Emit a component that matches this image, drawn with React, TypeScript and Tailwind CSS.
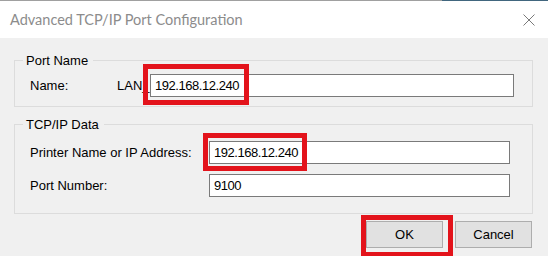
const font = { fontFamily: '"Liberation Sans", Arial, sans-serif' };

function Field({ value, className }: { value: string; className: string }) {
  return (
    <div
      className={`h-[23px] bg-white border border-[#7a7a7a] flex items-center pl-[4px] text-[13px] tracking-[-0.45px] text-black ${className}`}
    >
      {value}
    </div>
  );
}

function Group({
  title,
  children,
  className,
}: {
  title: string;
  children: React.ReactNode;
  className?: string;
}) {
  return (
    <fieldset className={`border border-[#dcdcdc] ${className ?? ""}`}>
      <legend className="ml-[8px] pl-[3px] pr-[5px] text-[13px] leading-[15px] text-black">
        {title}
      </legend>
      {children}
    </fieldset>
  );
}

function Button({ label }: { label: string }) {
  return (
    <button className="w-[77px] h-[27px] bg-[#e1e1e1] border border-[#adadad] text-[13px] text-black flex items-center justify-center">
      {label}
    </button>
  );
}

export default function App() {
  return (
    <div
      className="relative w-[548px] h-[256px] bg-[#f0f0f0] overflow-hidden flex flex-col"
      style={font}
    >
      <div className="flex h-px">
        <div className="w-[442px] bg-[#a0a0a0]" />
        <div className="flex-1 bg-[#41667e]" />
      </div>

      {/* title bar */}
      <div className="h-[37px] bg-white flex items-center justify-between pl-[10px] pr-[13px]">
        <span
          className="text-[14.5px] text-[#8c8c8c] pt-px"
          style={{ fontFamily: 'Lato, "Liberation Sans", sans-serif' }}
        >
          Advanced TCP/IP Port Configuration
        </span>
        <svg width="12" height="12" viewBox="0 0 12 12" className="mt-px">
          <path d="M0.5 0.5 L11.5 11.5 M11.5 0.5 L0.5 11.5" stroke="#7a7a7a" strokeWidth="1" />
        </svg>
      </div>

      <div className="pl-[14px] pr-[15px]">
        <Group title="Port Name" className="mt-[15px]">
          <div className="flex items-center pl-[15px] pr-[18px] pt-[6px] pb-[9px] text-[13px] text-black">
            <span className="w-[87px]">Name:</span>
            <span className="w-[33px]">LAN_</span>
            <Field value="192.168.12.240" className="flex-1" />
          </div>
        </Group>

        <Group title="TCP/IP Data" className="mt-[10px]">
          <div className="flex flex-col gap-[10px] pl-[15px] pr-[22px] pt-[9px] pb-[16px] text-[13px] text-black">
            <div className="flex items-center">
              <span className="w-[179px]">Printer Name or IP Address:</span>
              <Field value="192.168.12.240" className="flex-1" />
            </div>
            <div className="flex items-center">
              <span className="w-[179px]">Port Number:</span>
              <Field value="9100" className="flex-1" />
            </div>
          </div>
        </Group>
      </div>

      <div className="flex justify-end gap-[12px] pr-[16px] mt-[7px]">
        <Button label="OK" />
        <Button label="Cancel" />
      </div>

      {/* red annotation boxes */}
      <div className="absolute left-[143px] top-[64px] w-[106px] h-[41px] border-[5px] border-[#e3131b]" />
      <div className="absolute left-[203px] top-[133px] w-[104px] h-[38px] border-[5px] border-[#e3131b]" />
      <div className="absolute left-[361px] top-[215px] w-[92px] h-[42px] border-[5px] border-[#e3131b]" />
    </div>
  );
}
